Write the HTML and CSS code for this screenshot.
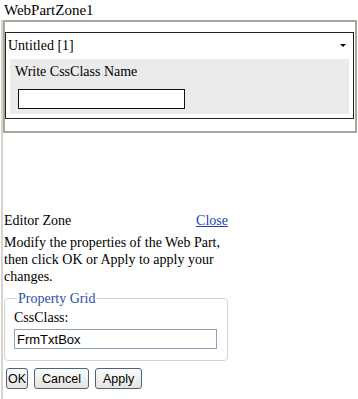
FILE: index.html
```html
<!DOCTYPE html>
<html lang="en">
<head>
    <meta charset="UTF-8">
    <title>WebPartZone1</title>
    <link rel="stylesheet" href="styles.css">
</head>
<body>
    <div class="zone-title">WebPartZone1</div>
    <div class="main">
        <div class="zone">
            <div class="part">
                <div class="part-head">
                    <span>Untitled [1]</span>
                    <span class="arrow"></span>
                </div>
                <div class="part-body">
                    <div>Write CssClass Name</div>
                    <input type="text" class="name-input">
                </div>
            </div>
        </div>

        <div class="editor">
            <div class="editor-head">
                <span>Editor Zone</span>
                <a href="#" class="close">Close</a>
            </div>
            <p class="editor-info">Modify the properties of the Web Part, then click OK or Apply to apply your changes.</p>
            <fieldset class="grid">
                <legend>Property Grid</legend>
                <div class="field-label">CssClass:</div>
                <input type="text" class="field-input" value="FrmTxtBox">
            </fieldset>
            <div class="buttons">
                <button class="btn btn-ok">OK</button>
                <button class="btn">Cancel</button>
                <button class="btn">Apply</button>
            </div>
        </div>
    </div>
</body>
</html>
```

FILE: styles.css
```css
body {
    font-family: "Liberation Serif", "Times New Roman", serif;
    font-size: 14px;
    line-height: 17px;
    margin: 0;
    background: white;
    color: #000;
}
.zone-title {
    font-size: 15px;
    padding: 2px 0 1px 4px;
}
.main {
    margin-left: 1px;
    border-left: 2px solid #d6d6ce;
    min-height: 380px;
}
.zone {
    border: 2px solid #a8a8a0;
    padding: 10px 1px 12px 0;
    margin-right: 1px;
}
.part {
    border: 1px solid #222;
    padding: 0 4px 4px 4px;
}
.part-head {
    display: flex;
    justify-content: space-between;
    align-items: center;
    padding: 4px 2px 5px 0;
    margin-left: -2px;
}
.arrow {
    width: 0;
    height: 0;
    border-left: 3px solid transparent;
    border-right: 3px solid transparent;
    border-top: 3px solid #000;
    margin-right: 1px;
}
.part-body {
    background: #ebebeb;
    padding: 4px 5px 5px 5px;
}
.name-input {
    display: block;
    margin: 9px 0 0 3px;
    width: 167px;
    height: 20px;
    box-sizing: border-box;
    border: 1px solid #111;
    padding: 0;
}
.editor {
    width: 224px;
    margin-top: 79px;
    padding-left: 1px;
}
.editor-head {
    display: flex;
    justify-content: space-between;
}
.close {
    color: #1c3fb8;
}
.editor-info {
    margin: 5px 0 0 0;
    line-height: 17px;
}
.grid {
    margin: 5px 0 0 0;
    padding: 2px 9px 11px 9px;
    border: 1px solid #d4d4c8;
    border-radius: 4px;
}
.grid legend {
    color: #2a4fa8;
    padding: 0 1px;
    margin-left: 3px;
}
.field-input {
    display: block;
    margin-top: 3px;
    width: 203px;
    height: 20px;
    box-sizing: border-box;
    border: 1px solid #8fa3ba;
    padding: 0 2px;
    font-family: "Liberation Sans", Arial, sans-serif;
    font-size: 13px;
}
.buttons {
    display: flex;
    gap: 6px;
    margin-top: 7px;
    padding-left: 2px;
}
.btn {
    height: 21px;
    padding: 0 7px;
    font-family: "Liberation Sans", Arial, sans-serif;
    font-size: 12.5px;
    border: 1px solid #4b6383;
    border-radius: 3px;
    background: linear-gradient(#fbfbfb, #e4e4e0);
    color: #000;
}
.btn-ok {
    padding: 0 1px;
}
```
